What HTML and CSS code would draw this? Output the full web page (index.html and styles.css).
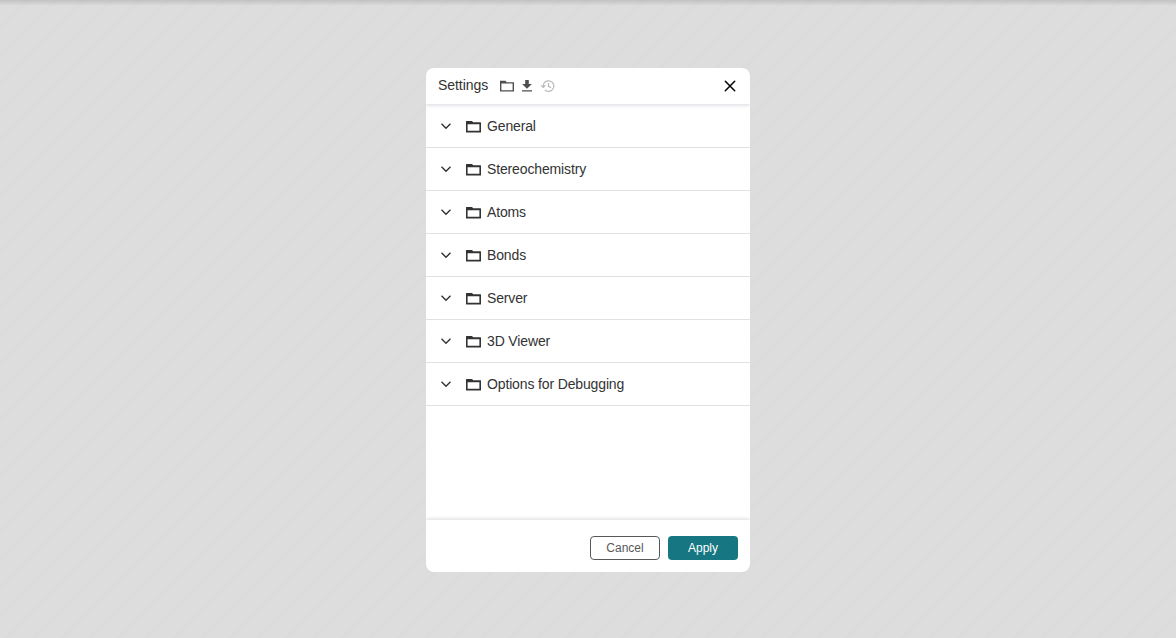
FILE: index.html
```
<!DOCTYPE html>
<html lang="en">
<head>
<meta charset="utf-8">
<title>Settings</title>
<link rel="stylesheet" href="styles.css">
</head>
<body>
<svg class="defs" width="0" height="0" aria-hidden="true">
  <symbol id="chevron" viewBox="0 0 12 12"><path d="M1.500 3.800 6 8.200l4.500-4.400" fill="none" stroke="currentColor" stroke-width="1.400"/></symbol>
  <symbol id="folder" viewBox="0 0 16 13"><path fill-rule="evenodd" d="M1.500 1H7l1.200 1.300h7.300q.5 0 .5.500v9.200q0 .5-.5.500h-14q-.5 0-.5-.5V1.500Q1 1 1.500 1zM2.600 4.200v6.600h11.800V4.200z" fill="currentColor"/></symbol>
</svg>
<main class="overlay">
  <section class="dialog">
    <header class="header">
      <h1 class="title">Settings</h1>
      <div class="tools">
        <svg class="tool open" viewBox="0 0 14 12"><path fill-rule="evenodd" d="M0 .8h5.500l1.200 1.400H14V11.500H0zM1.400 3.500v6.700h11.200V3.500z" fill="currentColor"/></svg>
        <svg class="tool save" viewBox="0 0 10 12"><path d="M3.200 0h3.600v4H9.900L5 8.800.100 4h3.100zM0 10.200h10v1.300H0z" fill="currentColor"/></svg>
        <svg class="tool reset" viewBox="0 0 14 14"><path d="M2.200 7.300V7a5.300 5.300 0 1 1 1.600 3.900M.2 6.300l2 2 2.100-2M7.500 3.900v3.500l2.500 1.300" fill="none" stroke="currentColor" stroke-width="1.200"/></svg>
      </div>
      <svg class="close" viewBox="0 0 12 12"><path d="M1.300 1.300l9.400 9.400M10.700 1.300l-9.400 9.400" stroke="currentColor" stroke-width="1.500" stroke-linecap="round"/></svg>
    </header>
    <div class="content">
      <div class="row"><svg class="chevron"><use href="#chevron"/></svg><svg class="folder"><use href="#folder"/></svg><span class="label">General</span></div>
      <div class="row"><svg class="chevron"><use href="#chevron"/></svg><svg class="folder"><use href="#folder"/></svg><span class="label">Stereochemistry</span></div>
      <div class="row"><svg class="chevron"><use href="#chevron"/></svg><svg class="folder"><use href="#folder"/></svg><span class="label">Atoms</span></div>
      <div class="row"><svg class="chevron"><use href="#chevron"/></svg><svg class="folder"><use href="#folder"/></svg><span class="label">Bonds</span></div>
      <div class="row"><svg class="chevron"><use href="#chevron"/></svg><svg class="folder"><use href="#folder"/></svg><span class="label">Server</span></div>
      <div class="row"><svg class="chevron"><use href="#chevron"/></svg><svg class="folder"><use href="#folder"/></svg><span class="label">3D Viewer</span></div>
      <div class="row"><svg class="chevron"><use href="#chevron"/></svg><svg class="folder"><use href="#folder"/></svg><span class="label">Options for Debugging</span></div>
    </div>
    <footer class="footer">
      <button class="button cancel">Cancel</button>
      <button class="button apply">Apply</button>
    </footer>
  </section>
</main>
</body>
</html>
```
FILE: styles.css
```
* { box-sizing: border-box; }
body { margin: 0; font-family: "Liberation Sans", Arial, sans-serif; color: #333; }
.defs { display: none; }
.overlay {
  height: 638px;
  display: flex;
  justify-content: center;
  align-items: flex-start;
  padding-top: 68px;
  background:
    linear-gradient(rgba(0, 0, 0, .12), rgba(0, 0, 0, 0)) 0 0 / 100% 6px no-repeat,
    linear-gradient(135deg, #dbdbdb 0 4%, #dddddd 4% 46%, #dbdbdb 46% 54%, #dddddd 54% 96%, #dbdbdb 96%) 0 0 / 28px 28px;
}
.dialog {
  width: 324px;
  height: 504px;
  display: flex;
  flex-direction: column;
  background: #fff;
  border-radius: 8px;
  overflow: hidden;
}
.header {
  height: 36px;
  flex: none;
  display: flex;
  align-items: center;
  padding: 0 14px 0 12px;
  box-shadow: 0 1px 4px rgba(103, 104, 132, .28);
}
.title { margin: 0 0 2px; font-size: 14px; font-weight: 400; line-height: 16px; width: 62px; letter-spacing: -.05px; }
.tools { display: flex; align-items: center; flex: 1; color: #4f4f4f; }
.tool { flex: none; display: block; }
.open { width: 14px; height: 12px; }
.save { width: 10px; height: 12px; margin-left: 8px; }
.reset { width: 14px; height: 14px; margin-left: 9px; color: #b8b8b8; }
.close { width: 12px; height: 12px; color: #000; }
.content { flex: 1; }
.row {
  height: 43px;
  display: flex;
  align-items: center;
  padding: 0 0 1px 14px;
  border-bottom: 1px solid #e1e1e1;
}
.row:first-child { height: 44px; padding: 1px 0 1px 14px; }
.chevron { width: 12px; height: 12px; }
.folder { width: 16px; height: 13px; margin: 1px 0 0 13px; }
.label { margin-left: 6px; font-size: 14px; line-height: 16px; letter-spacing: -.14px; }
.footer {
  height: 52px;
  flex: none;
  display: flex;
  justify-content: flex-end;
  gap: 8px;
  padding: 16px 12px 12px;
  box-shadow: 0 -1px 4px rgba(0, 0, 0, .15);
}
.button {
  width: 70px;
  height: 24px;
  padding: 0;
  font: 12px "Liberation Sans", Arial, sans-serif;
  border-radius: 4px;
}
.cancel { color: #585858; background: #fff; border: 1px solid #585858; }
.apply { color: #fff; background: #167782; border: 0; }
```
